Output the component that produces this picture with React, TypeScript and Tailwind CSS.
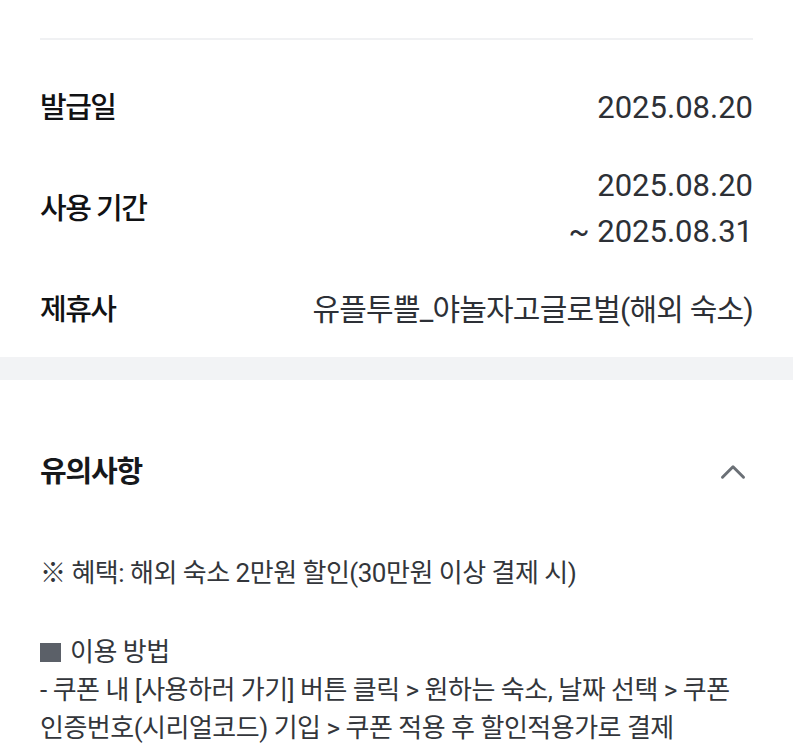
import { ChevronUp } from 'lucide-react'

const font = "font-['Roboto','Noto_Sans_CJK_KR',sans-serif]"

function InfoRow({ label, children }: { label: string; children: React.ReactNode }) {
  return (
    <div className="flex items-center justify-between">
      <span className="text-[29px] font-medium leading-[46px] tracking-[-1.5px] text-[#111214]">{label}</span>
      <div className="flex flex-col items-end text-[#2d3036]">{children}</div>
    </div>
  )
}

function DateText({ children }: { children: React.ReactNode }) {
  return <span className="text-[31px] leading-[46px]">{children}</span>
}

export default function App() {
  return (
    <div className={`${font} min-h-screen bg-white`}>
      {/* coupon info */}
      <div className="px-10 pt-[38px]">
        <div className="h-[2px] bg-[#f0f1f3]" />
        <div className="mt-[45px] flex flex-col gap-8">
          <InfoRow label="발급일">
            <DateText>2025.08.20</DateText>
          </InfoRow>
          <InfoRow label="사용 기간">
            <DateText>2025.08.20</DateText>
            <DateText>~ 2025.08.31</DateText>
          </InfoRow>
          <InfoRow label="제휴사">
            <span className="text-[30px] leading-[46px] tracking-[-0.8px]">유플투쁠_야놀자고글로벌(해외 숙소)</span>
          </InfoRow>
        </div>
      </div>

      <div className="mt-6 h-[23px] bg-[#f2f3f5]" />

      {/* notice */}
      <div className="px-10 pt-[71px]">
        <div className="flex items-center justify-between">
          <h2 className="text-[29px] font-bold leading-[40px] tracking-[-1.2px] text-[#16181b]">유의사항</h2>
          <ChevronUp className="-mr-[1px] h-[42px] w-[42px] text-[#6b7076]" strokeWidth={1.7} />
        </div>

        <div className="mt-[61px] break-keep text-[26px] leading-[38px] tracking-[-0.5px] text-[#33363b]">
          <p>※ 혜택: 해외 숙소 2만원 할인(30만원 이상 결제 시)</p>
          <p className="mt-[41px] flex items-center">
            <span className="mr-[9px] inline-block h-[19px] w-[21px] bg-[#5b6068]" />
            이용 방법
          </p>
          <p>- 쿠폰 내 [사용하러 가기] 버튼 클릭 &gt; 원하는 숙소, 날짜 선택 &gt; 쿠폰 인증번호(시리얼코드) 기입 &gt; 쿠폰 적용 후 할인적용가로 결제</p>
        </div>
      </div>
    </div>
  )
}
